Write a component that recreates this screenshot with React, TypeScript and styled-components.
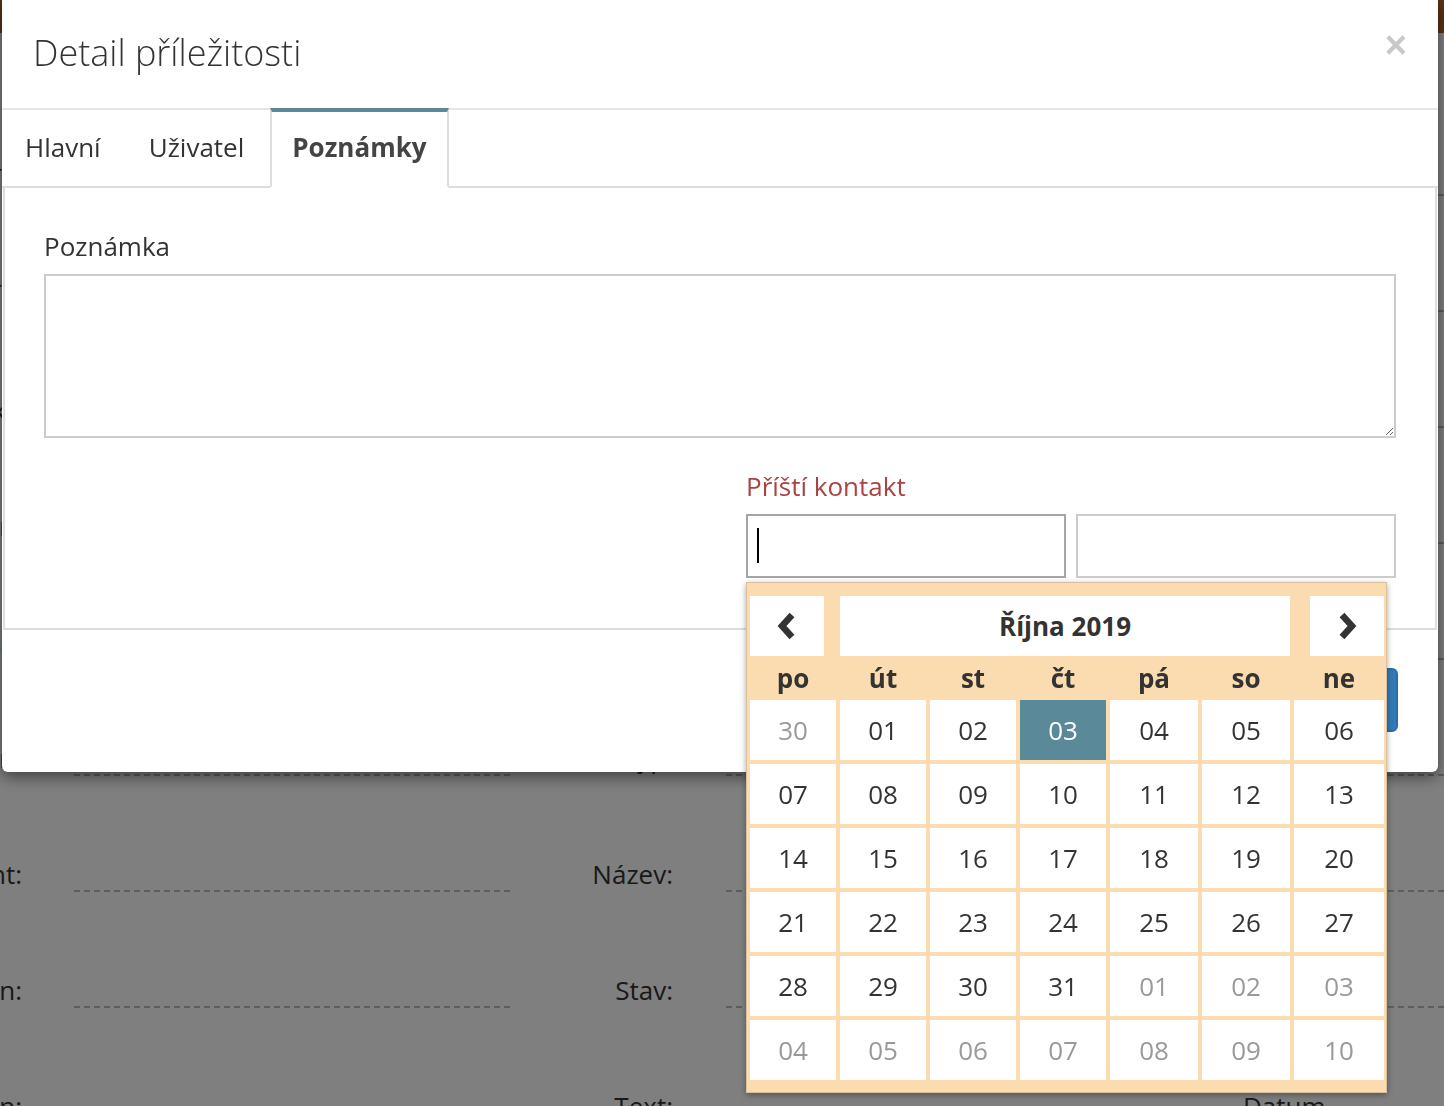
import React from 'react';
import styled, { createGlobalStyle } from 'styled-components';

const GlobalStyle = createGlobalStyle`
    html, body {
        margin: 0;
        padding: 0;
        overflow: hidden;
    }
    body {
        font-family: "Open Sans", "DejaVu Sans", sans-serif;
        color: #333;
        background: #fff;
    }
    * {
        box-sizing: border-box;
    }
`

/* page behind the dialog */

const Page = styled.div`
    height: 1106px;
    overflow: hidden;
    background: #fff;
`

const TopBar = styled.div`
    height: 33px;
    background: #b4642c;
`

const Form = styled.div`
    padding-top: 87px;
`

const FormRow = styled.div`
    display: grid;
    grid-template-columns: 74px 436px 216px 1fr;
    align-items: center;
    height: 116px;
`

const FormLabel = styled.div<{ $gap: number }>`
    display: flex;
    justify-content: flex-end;
    padding-right: ${p => p.$gap}px;
    font-size: 26px;
    line-height: 36px;
    white-space: nowrap;
    color: #333;
`

const FormField = styled.div`
    height: 36px;
    border-bottom: 2px dashed #bbb;
`

const SplitField = styled.div`
    display: flex;
    align-items: center;
`

const ShortField = styled(FormField)`
    width: 470px;
    margin-right: 47px;
`

const Backdrop = styled.div`
    position: fixed;
    inset: 0;
    background: rgba(0, 0, 0, 0.5);
`

/* dialog */

const Modal = styled.div`
    position: fixed;
    top: 0;
    left: 2px;
    width: 1436px;
    background: #fff;
    border-radius: 0 0 6px 6px;
    box-shadow: 0 5px 15px rgba(0, 0, 0, 0.5);
`

const Header = styled.div`
    height: 108px;
    display: flex;
    align-items: center;
    justify-content: space-between;
    padding: 0 31px 4px 31px;
`

const Title = styled.h4`
    margin: 0;
    font-size: 36px;
    font-weight: 300;
    color: #333;
`

const Close = styled.button`
    border: 0;
    background: none;
    padding: 0;
    font-family: "Liberation Sans", sans-serif;
    font-size: 38px;
    font-weight: bold;
    line-height: 1;
    color: #c8c8c8;
    margin-top: -14px;
    cursor: pointer;
`

const Tabs = styled.div`
    display: flex;
    gap: 4px;
    padding-left: 1px;
    border-top: 2px solid #e5e5e5;
    border-bottom: 2px solid #ddd;
`

const Tab = styled.div<{ $active?: boolean }>`
    padding: 16px 20px 20px;
    margin-bottom: -2px;
    font-size: 26px;
    line-height: 38px;
    border: 2px solid transparent;
    color: ${p => (p.$active ? '#444' : '#333')};
    font-weight: ${p => (p.$active ? 700 : 400)};
    ${p => p.$active && `
        margin-top: -2px;
        background: #fff;
        border-color: #ddd;
        border-top: 4px solid #5a899a;
        border-bottom-color: #fff;
    `}
`

const Panel = styled.div`
    margin: 0 1px;
    padding: 40px 39px 50px;
    border: 2px solid #ddd;
    border-top: 0;
`

const Label = styled.label<{ $error?: boolean }>`
    display: block;
    font-size: 26px;
    line-height: 36px;
    margin-bottom: 10px;
    color: ${p => (p.$error ? '#a94442' : '#333')};
`

const TextArea = styled.textarea`
    display: block;
    width: 100%;
    height: 164px;
    border: 2px solid #ccc;
    font: inherit;
    resize: vertical;
    outline: none;
`

const Columns = styled.div`
    display: grid;
    grid-template-columns: 1fr 1fr;
    column-gap: 52px;
    margin-top: 30px;
`

const InputPair = styled.div`
    display: grid;
    grid-template-columns: 1fr 1fr;
    column-gap: 10px;
`

const InputWrap = styled.div`
    position: relative;
`

const Input = styled.input<{ $focused?: boolean }>`
    display: block;
    width: 100%;
    height: 64px;
    border: 2px solid ${p => (p.$focused ? '#a6a6a6' : '#ccc')};
    outline: none;
    font: inherit;
    font-size: 26px;
    padding: 0 9px;
`

const Caret = styled.span`
    position: absolute;
    left: 11px;
    top: 14px;
    width: 2px;
    height: 35px;
    background: #000;
`

const Footer = styled.div`
    display: flex;
    justify-content: flex-end;
    padding: 38px 40px 40px;
`

const PrimaryButton = styled.button`
    height: 64px;
    padding: 0 28px;
    font: inherit;
    font-size: 26px;
    color: #fff;
    background: #337ab7;
    border: 2px solid #2e6da4;
    border-radius: 6px;
`

/* date picker */

const columns = '86px 86px 86px 86px 88px 88px 90px'

const Picker = styled.div`
    position: absolute;
    top: calc(100% + 4px);
    left: 0;
    z-index: 10;
    width: 641px;
    padding: 13px 2px 12px 3px;
    background: #fbdcb0;
    border: 1px solid #d9bf9b;
    box-shadow: 0 2px 6px rgba(0, 0, 0, 0.35);
`

const PickerNav = styled.div`
    display: flex;
    height: 60px;
`

const NavButton = styled.div`
    width: 74px;
    display: flex;
    align-items: center;
    justify-content: center;
    background: #fff;
`

const MonthTitle = styled.div`
    flex: 1;
    margin: 0 20px 0 16px;
    display: flex;
    align-items: center;
    justify-content: center;
    background: #fff;
    font-size: 26px;
    font-weight: 700;
    color: #333;
`

const WeekDays = styled.div`
    display: grid;
    grid-template-columns: ${columns};
    column-gap: 4px;
    height: 44px;
    align-items: center;
    text-align: center;
    font-size: 26px;
    font-weight: 700;
    color: #333;
`

const DayGrid = styled.div`
    display: grid;
    grid-template-columns: ${columns};
    grid-auto-rows: 60px;
    gap: 4px;
`

const Day = styled.div<{ $muted?: boolean; $selected?: boolean }>`
    display: flex;
    align-items: center;
    justify-content: center;
    font-size: 26px;
    background: ${p => (p.$selected ? '#5a899a' : '#fff')};
    color: ${p => (p.$selected ? '#fff' : p.$muted ? '#999' : '#333')};
`

const Chevron = ({ dir }: { dir: 'left' | 'right' }) => (
    <svg width="20" height="28" viewBox="0 0 20 28">
        <polyline
            points={dir === 'left' ? '15,3 5,14 15,25' : '5,3 15,14 5,25'}
            fill="none"
            stroke="#333"
            strokeWidth="6.5"
            strokeLinejoin="miter"
        />
    </svg>
)

const pad = (n: number) => (n < 10 ? '0' + n : String(n))

type Cell = { label: string, muted: boolean, selected: boolean }

const buildDays = (): Array<Cell> => {
    const cells: Array<Cell> = [{ label: '30', muted: true, selected: false }]
    for (let d = 1; d <= 31; d++) cells.push({ label: pad(d), muted: false, selected: d === 3 })
    for (let d = 1; cells.length < 42; d++) cells.push({ label: pad(d), muted: true, selected: false })
    return cells
}

const weekDays = ['po', 'út', 'st', 'čt', 'pá', 'so', 'ne']

const backgroundRows = [
    ['Zákazník:', 'Kategorie:'],
    ['Obchodník:', 'Priorita:'],
    ['Kontakt:', 'Zdroj:'],
    ['Telefon:', 'Hodnota:'],
    ['E-mail:', 'Měna:'],
    ['Vytvořen:', 'Typ:'],
    ['Klient:', 'Název:'],
    ['Založen:', 'Stav:'],
]

export default function App() {
    const days = buildDays()

    return (
        <>
            <GlobalStyle />
            <Page>
                <TopBar />
                <Form>
                    {backgroundRows.map(([a, b]) => (
                        <FormRow key={a}>
                            <FormLabel $gap={52}>{a}</FormLabel>
                            <FormField />
                            <FormLabel $gap={53}>{b}</FormLabel>
                            <FormField />
                        </FormRow>
                    ))}
                    <FormRow>
                        <FormLabel $gap={52}>Upraven:</FormLabel>
                        <FormField />
                        <FormLabel $gap={53}>Text:</FormLabel>
                        <SplitField>
                            <ShortField />
                            <FormLabel $gap={0}>Datum</FormLabel>
                        </SplitField>
                    </FormRow>
                </Form>
            </Page>
            <Backdrop />
            <Modal>
                <Header>
                    <Title>Detail příležitosti</Title>
                    <Close type="button">×</Close>
                </Header>
                <Tabs>
                    <Tab>Hlavní</Tab>
                    <Tab>Uživatel</Tab>
                    <Tab $active>Poznámky</Tab>
                </Tabs>
                <Panel>
                    <Label>Poznámka</Label>
                    <TextArea />
                    <Columns>
                        <div />
                        <div>
                            <Label $error>Příští kontakt</Label>
                            <InputPair>
                                <InputWrap>
                                    <Input $focused />
                                    <Caret />
                                    <Picker>
                                        <PickerNav>
                                            <NavButton><Chevron dir="left" /></NavButton>
                                            <MonthTitle>Října 2019</MonthTitle>
                                            <NavButton><Chevron dir="right" /></NavButton>
                                        </PickerNav>
                                        <WeekDays>
                                            {weekDays.map(w => <div key={w}>{w}</div>)}
                                        </WeekDays>
                                        <DayGrid>
                                            {days.map((d, i) => (
                                                <Day key={i} $muted={d.muted} $selected={d.selected}>{d.label}</Day>
                                            ))}
                                        </DayGrid>
                                    </Picker>
                                </InputWrap>
                                <Input />
                            </InputPair>
                        </div>
                    </Columns>
                </Panel>
                <Footer>
                    <PrimaryButton type="button">Uložit</PrimaryButton>
                </Footer>
            </Modal>
        </>
    )
}
